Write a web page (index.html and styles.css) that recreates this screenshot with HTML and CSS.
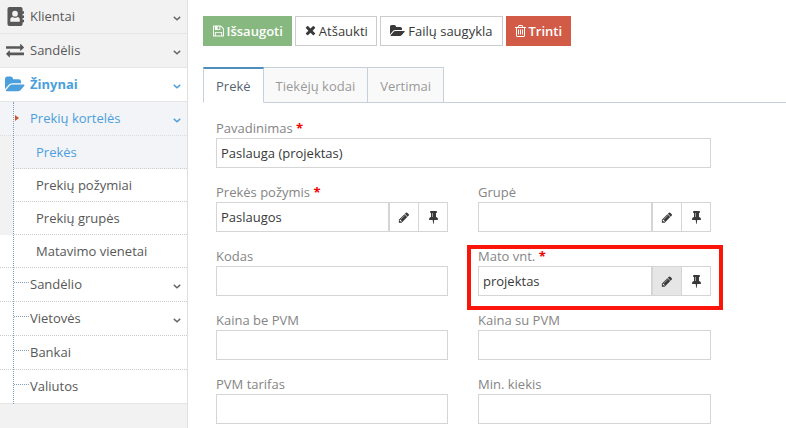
FILE: index.html
```html
<!DOCTYPE html>
<html lang="lt">
<head>
<meta charset="utf-8">
<title>Prekė</title>
<link rel="stylesheet" href="styles.css">
</head>
<body>
<svg class="sprite" xmlns="http://www.w3.org/2000/svg">
  <symbol id="i-times" viewBox="0 0 1408 1792"><path d="M1298 1214q0 40-28 68l-136 136q-28 28-68 28t-68-28l-294-294-294 294q-28 28-68 28t-68-28l-136-136q-28-28-28-68t28-68l294-294-294-294q-28-28-28-68t28-68l136-136q28-28 68-28t68 28l294 294 294-294q28-28 68-28t68 28l136 136q28 28 28 68t-28 68l-294 294 294 294q28 28 28 68z"/></symbol>
  <symbol id="i-folder" viewBox="0 0 1920 1792"><path d="M1879 952q0 31-31 66l-336 396q-43 51-120.500 86.500t-143.500 35.500h-1088q-34 0-60.500-13t-26.500-43q0-31 31-66l336-396q43-51 120.500-86.500t143.500-35.500h1088q34 0 60.500 13t26.500 43zm-343-344v160h-832q-94 0-197 47.500t-164 119.500l-337 396-5 6q0-4-.5-12.500t-.5-12.500v-960q0-92 66-158t158-66h320q92 0 158 66t66 158v32h544q92 0 158 66t66 158z"/></symbol>
  <symbol id="i-pencil" viewBox="0 0 1792 1792"><path d="M491 1536l91-91-235-235-91 91v107h128v128h107zm523-928q0-22-22-22-10 0-17 7l-542 542q-7 7-7 17 0 22 22 22 10 0 17-7l542-542q7-7 7-17zm-54-192l416 416-832 832h-416v-416zm683 96q0 53-37 90l-166 166-416-416 166-165q36-38 90-38 53 0 91 38l235 234q37 39 37 91z"/></symbol>
  <symbol id="i-pin" viewBox="0 0 1152 1792"><path d="M480 864v-448q0-14-9-23t-23-9-23 9-9 23v448q0 14 9 23t23 9 23-9 9-23zm672 352q0 26-19 45t-45 19h-429l-51 483q-2 12-10.500 20.500t-20.500 8.500h-1q-27 0-32-27l-76-485h-404q-26 0-45-19t-19-45q0-123 78.500-221.500t177.500-98.500v-512q-52 0-90-38t-38-90 38-90 90-38h640q52 0 90 38t38 90-38 90-90 38v512q99 0 177.500 98.500t78.500 221.500z"/></symbol>
  <symbol id="i-trash" viewBox="0 0 1408 1792"><path d="M512 736v576q0 14-9 23t-23 9h-64q-14 0-23-9t-9-23v-576q0-14 9-23t23-9h64q14 0 23 9t9 23zm256 0v576q0 14-9 23t-23 9h-64q-14 0-23-9t-9-23v-576q0-14 9-23t23-9h64q14 0 23 9t9 23zm256 0v576q0 14-9 23t-23 9h-64q-14 0-23-9t-9-23v-576q0-14 9-23t23-9h64q14 0 23 9t9 23zm128 724v-948h-896v948q0 22 7 40.500t14.500 27 10.500 8.500h832q3 0 10.500-8.500t14.500-27 7-40.500zm-672-1076h448l-48-117q-7-9-17-11h-317q-10 2-17 11zm928 32v64q0 14-9 23t-23 9h-96v948q0 83-47 143.500t-113 60.500h-832q-66 0-113-58.500t-47-141.500v-952h-96q-14 0-23-9t-9-23v-64q0-14 9-23t23-9h309l70-167q15-37 54-63t79-26h320q40 0 79 26t54 63l70 167h309q14 0 23 9t9 23z"/></symbol>
  <symbol id="i-save" viewBox="0 0 1536 1792"><path d="M384 1536h768v-384h-768v384zm896 0h128v-896q0-14-10-38.500t-20-34.500l-281-281q-10-10-34-20t-39-10v416q0 40-28 68t-68 28h-576q-40 0-68-28t-28-68v-416h-128v1280h128v-416q0-40 28-68t68-28h832q40 0 68 28t28 68v416zm-384-928v-320q0-13-9.500-22.500t-22.500-9.500h-192q-13 0-22.500 9.500t-9.500 22.500v320q0 13 9.500 22.500t22.500 9.500h192q13 0 22.500-9.500t9.500-22.500zm640 32v928q0 40-28 68t-68 28h-1344q-40 0-68-28t-28-68v-1344q0-40 28-68t68-28h928q40 0 88 20t76 48l280 280q28 28 48 76t20 88z"/></symbol>
  <symbol id="i-exchange" viewBox="0 0 1792 1792"><path d="M1792 1184v192q0 13-9.500 22.500t-22.500 9.500h-1376v192q0 13-9.500 22.500t-22.500 9.500q-12 0-24-10l-319-320q-9-9-9-22 0-14 9-23l320-320q9-9 23-9 13 0 22.500 9.500t9.500 22.500v192h1376q13 0 22.500 9.500t9.500 22.500zm0-544q0 14-9 23l-320 320q-9 9-23 9-13 0-22.500-9.500t-9.500-22.500v-192h-1376q-13 0-22.500-9.500t-9.500-22.500v-192q0-13 9.500-22.500t22.500-9.500h1376v-192q0-14 9-23t23-9q12 0 24 10l319 319q9 9 9 23z"/></symbol>
  <symbol id="i-book" viewBox="0 0 18 20"><path fill-rule="evenodd" d="M2.500 0h12a2 2 0 0 1 2 2v2.500H18v2.500h-1.500v2H18v2.500h-1.500v2H18V16h-1.500v2a2 2 0 0 1-2 2h-12a2 2 0 0 1-2-2V2a2 2 0 0 1 2-2zM8.500 4a3 3 0 1 0 0 6 3 3 0 0 0 0-6zM6 10.500c-1.500 0-2.500 1-2.500 2.500v2.500h10V13c0-1.500-1-2.500-2.500-2.500-.8.600-1.600.9-2.500.9s-1.700-.3-2.500-.9z"/></symbol>
  <symbol id="i-chev" viewBox="0 0 10 6"><path d="M1 1l4 3.500L9 1" fill="none" stroke="currentColor" stroke-width="1.800"/></symbol>
</svg>

<aside class="sidebar">
  <ul class="menu">
    <li class="item top"><svg class="ic-book"><use href="#i-book"/></svg><span>Klientai</span><svg class="chev"><use href="#i-chev"/></svg></li>
    <li class="item top"><svg class="ic-exchange"><use href="#i-exchange"/></svg><span>Sandėlis</span><svg class="chev"><use href="#i-chev"/></svg></li>
    <li class="item top open"><svg class="ic-folder"><use href="#i-folder"/></svg><span>Žinynai</span><svg class="chev"><use href="#i-chev"/></svg></li>
  </ul>
  <ul class="tree">
    <li class="item second current"><span>Prekių kortelės</span><svg class="chev"><use href="#i-chev"/></svg></li>
    <li class="item third selected"><span>Prekės</span></li>
    <li class="item third"><span>Prekių požymiai</span></li>
    <li class="item third"><span>Prekių grupės</span></li>
    <li class="item third last"><span>Matavimo vienetai</span></li>
    <li class="item second branch"><span>Sandėlio</span><svg class="chev"><use href="#i-chev"/></svg></li>
    <li class="item second branch"><span>Vietovės</span><svg class="chev"><use href="#i-chev"/></svg></li>
    <li class="item second branch"><span>Bankai</span></li>
    <li class="item second branch"><span>Valiutos</span></li>
  </ul>
</aside>

<main class="main">
  <div class="toolbar">
    <button class="btn btn-green"><svg class="ic"><use href="#i-save"/></svg>Išsaugoti</button>
    <button class="btn"><svg class="ic"><use href="#i-times"/></svg>Atšaukti</button>
    <button class="btn btn-files"><svg class="ic ic-wide"><use href="#i-folder"/></svg>Failų saugykla</button>
    <button class="btn btn-red"><svg class="ic"><use href="#i-trash"/></svg>Trinti</button>
  </div>

  <div class="tabs">
    <div class="tab active">Prekė</div>
    <div class="tab">Tiekėjų kodai</div>
    <div class="tab">Vertimai</div>
  </div>

  <form class="form">
    <div class="field wide">
      <label class="label">Pavadinimas <b class="req">*</b></label>
      <div class="input">Paslauga (projektas)</div>
    </div>
    <div class="field">
      <label class="label">Prekės požymis <b class="req">*</b></label>
      <div class="group">
        <div class="input">Paslaugos</div>
        <div class="addon"><svg class="ic-pencil"><use href="#i-pencil"/></svg></div>
        <div class="addon"><svg class="ic-pin"><use href="#i-pin"/></svg></div>
      </div>
    </div>
    <div class="field">
      <label class="label">Grupė</label>
      <div class="group">
        <div class="input"></div>
        <div class="addon"><svg class="ic-pencil"><use href="#i-pencil"/></svg></div>
        <div class="addon"><svg class="ic-pin"><use href="#i-pin"/></svg></div>
      </div>
    </div>
    <div class="field">
      <label class="label">Kodas</label>
      <div class="input"></div>
    </div>
    <div class="field marked">
      <label class="label">Mato vnt. <b class="req">*</b></label>
      <div class="group">
        <div class="input">projektas</div>
        <div class="addon pressed"><svg class="ic-pencil"><use href="#i-pencil"/></svg></div>
        <div class="addon"><svg class="ic-pin"><use href="#i-pin"/></svg></div>
      </div>
    </div>
    <div class="field">
      <label class="label">Kaina be PVM</label>
      <div class="input"></div>
    </div>
    <div class="field">
      <label class="label">Kaina su PVM</label>
      <div class="input"></div>
    </div>
    <div class="field">
      <label class="label">PVM tarifas</label>
      <div class="input"></div>
    </div>
    <div class="field">
      <label class="label">Min. kiekis</label>
      <div class="input"></div>
    </div>
  </form>
</main>
</body>
</html>
```
FILE: styles.css
```css
* { box-sizing: border-box; }

html, body { height: 100%; }

body {
  margin: 0;
  display: flex;
  height: 428px;
  overflow: hidden;
  background: #fff;
  font-family: "Open Sans", sans-serif;
  font-size: 13px;
  color: #393939;
}

.sprite { display: none; }

ul { list-style: none; margin: 0; padding: 0; }

/* Sidebar */
.sidebar {
  flex: 0 0 188px;
  background: #f2f2f2;
  border-right: 1px solid #e0e0e0;
}

.item {
  position: relative;
  display: flex;
  align-items: center;
  height: 34px;
  padding-left: 30px;
  padding-right: 5px;
  color: #585858;
  background: #fff;
}
.item span { flex: 1; }

.top {
  background: #f2f2f2;
  border-bottom: 1px solid #e5e5e5;
  padding-bottom: 1px;
}
.top svg:first-child { position: absolute; }

.open { background: #fff; color: #4b9fdc; font-weight: 700; }

.ic-book { left: 7px; top: 7px; width: 17px; height: 19px; fill: #585858; }
.ic-exchange { left: 6px; top: 7px; width: 18px; height: 18px; fill: #585858; }
.ic-folder { left: 5px; top: 7px; width: 20px; height: 19px; fill: #4b9fdc; }

.chev {
  width: 8px;
  height: 5px;
  margin-right: 1px;
  color: #666;
  flex: none;
  margin-top: 4px;
}
.open .chev, .current .chev { color: #4b9fdc; }

.tree { position: relative; }
.tree::before {
  content: "";
  position: absolute;
  left: 13px;
  top: 0;
  bottom: 0;
  border-left: 1px dotted #7f9fc0;
  z-index: 1;
}

.second { border-bottom: 1px dotted #ccc; padding-bottom: 1px; }
.third {
  height: 33px;
  border-bottom: 1px dotted #ccc;
  margin-left: 14px;
  padding-left: 22px;
}
.third.last { margin-left: 0; padding-left: 36px; }

.current { background: #f3f4f8; color: #4b9fdc; border-bottom-color: #ddd; }
.current::before {
  content: "";
  position: absolute;
  left: 15px;
  top: 13px;
  border-left: 4px solid #c8562f;
  border-top: 3.500px solid transparent;
  border-bottom: 3.500px solid transparent;
}
.selected { background: #f3f4f8; color: #4b9fdc; }

.branch::before {
  content: "";
  position: absolute;
  left: 14px;
  top: 14px;
  width: 15px;
  border-top: 1px dotted #7f9fc0;
}
.tree .item:last-child { border-bottom: 1px solid #e5e5e5; }

/* Main */
.main { flex: 1; min-width: 0; padding-top: 16px; padding-left: 15px; }

.toolbar { display: flex; gap: 3px; }

.btn {
  display: flex;
  align-items: center;
  gap: 3px;
  height: 30px;
  padding: 0 8.500px;
  border: 1px solid #ccc;
  background: #fff;
  color: #393939;
  font: inherit;
  white-space: nowrap;
}
.btn .ic { width: 11px; height: 14px; fill: currentColor; flex: none; }
.btn .ic-wide { width: 15px; }
.btn-files { padding: 0 9px; }
.btn-green { background: #87b87f; border-color: #87b87f; color: #fff; font-weight: 600; }
.btn-red { background: #d15b47; border-color: #d15b47; color: #fff; font-weight: 600; padding: 0 8px; }

.tabs {
  display: flex;
  margin-top: 21px;
  height: 36px;
  border-bottom: 1px solid #c5d0dc;
}
.tab {
  height: 36px;
  padding: 0 12px;
  line-height: 36px;
  border: 1px solid #c5d0dc;
  border-left-width: 0;
  background: #f9f9f9;
  color: #999;
}
.tab.active {
  position: relative;
  border-left-width: 1px;
  border-top: 2px solid #4c8fbd;
  border-bottom-color: #fff;
  background: #fff;
  color: #576373;
  line-height: 34px;
}

/* Form */
.form {
  display: grid;
  grid-template-columns: 232px 233px;
  column-gap: 30px;
  row-gap: 14px;
  padding: 15px 0 0 13px;
}
.field { position: relative; }
.field.wide { grid-column: 1 / -1; }

.label {
  display: block;
  height: 20px;
  line-height: 20px;
  color: #858585;
}
.req { color: #e00; font-weight: 700; }

.input {
  height: 30px;
  padding: 0 4px;
  line-height: 28px;
  border: 1px solid #d5d5d5;
  color: #393939;
  background: #fff;
}

.group { display: flex; }
.group .input { flex: 1; min-width: 0; }

.addon {
  flex: none;
  display: flex;
  align-items: center;
  justify-content: center;
  width: 30px;
  height: 30px;
  margin-left: -1px;
  border: 1px solid #d5d5d5;
  background: #fff;
}
.group .input + .addon { margin-left: 0; }
.addon svg { fill: #393939; }
.ic-pencil { width: 12px; height: 13px; }
.ic-pin { width: 9px; height: 14px; }
.pressed { background: #e6e6e6; }

.marked::after {
  content: "";
  position: absolute;
  left: -11px;
  right: -12px;
  top: -1px;
  bottom: -14px;
  border: 4px solid #fb1409;
  pointer-events: none;
}
```
